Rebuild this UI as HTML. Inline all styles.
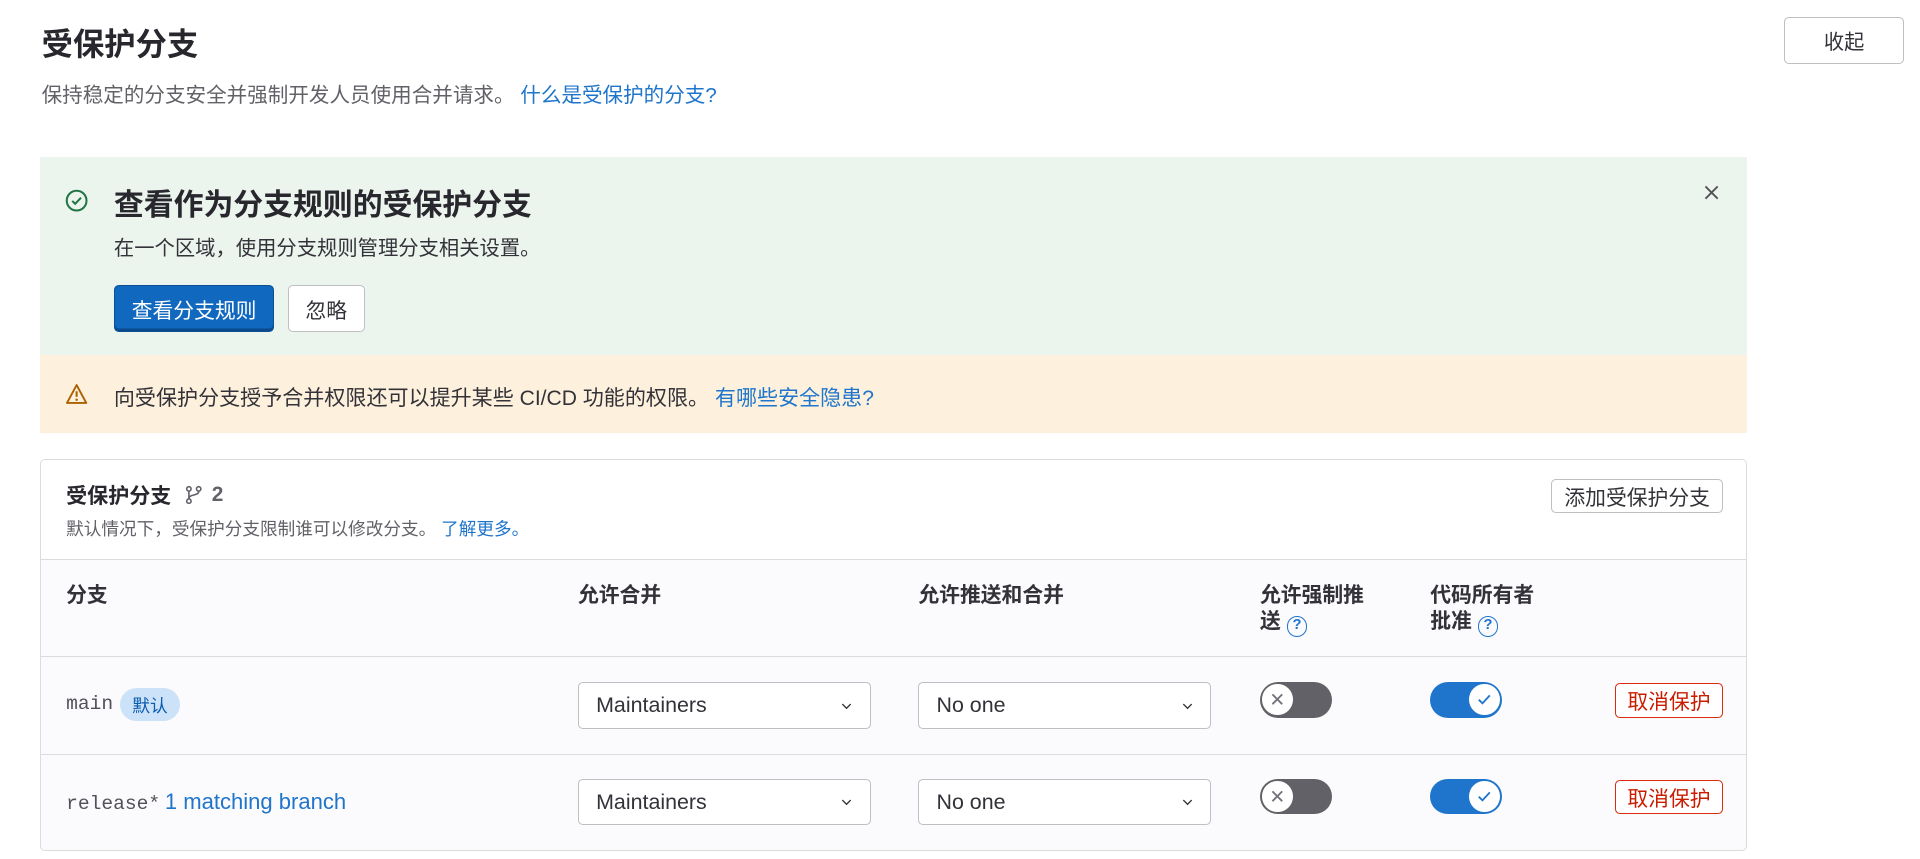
<!DOCTYPE html>
<html><head><meta charset="utf-8">
<style>
html,body{margin:0;padding:0;background:#fff;}
body{width:1568px;height:701.5px;zoom:1.2245;position:relative;overflow:hidden;font-family:"Liberation Sans","Noto Sans CJK SC",sans-serif;color:#333238;font-size:14px;}
.a{position:absolute;}
a{color:#1f75cb;text-decoration:none;}
.btn{position:absolute;box-sizing:border-box;border:1px solid #bfbfc3;border-radius:4px;background:#fff;display:flex;align-items:center;justify-content:center;font-size:17px;color:#333238;}
.sel{position:absolute;box-sizing:border-box;width:239px;height:38px;border:1px solid #bfbfc3;border-radius:4px;background:#fff;font-size:17.5px;padding-left:14px;display:flex;align-items:center;color:#333238;}
.sel svg{position:absolute;right:14px;top:16px;}
.tg{position:absolute;width:59px;height:29px;border-radius:15px;}
.tg .k{position:absolute;top:2px;width:25px;height:25px;border-radius:50%;background:#fff;}
.th{position:absolute;font-weight:bold;font-size:17px;line-height:21px;color:#333238;}
.rm{position:absolute;box-sizing:border-box;width:88px;height:28px;border:1px solid #dd2b0e;border-radius:4px;color:#c91c00;font-size:17px;display:flex;align-items:center;justify-content:center;background:#fff;}
.q{display:inline-block;width:17px;height:17px;border:1.5px solid #1f75cb;border-radius:50%;box-sizing:border-box;color:#1f75cb;font-size:12px;line-height:14px;text-align:center;vertical-align:-1px;font-weight:bold;}
.mono{font-family:"Liberation Mono",monospace;font-size:16px;color:#535158;}
</style></head><body>
<div class="a" style="left:34px;top:16px;font-size:25.6px;font-weight:bold;color:#28272d;">受保护分支</div>
<div class="a" style="left:34px;top:64px;font-size:16.8px;color:#626168;">保持稳定的分支安全并强制开发人员使用合并请求。 <a>什么是受保护的分支?</a></div>
<div class="btn" style="left:1457px;top:14px;width:98px;height:38px;font-size:16.5px;">收起</div>

<div class="a" style="left:33px;top:128px;width:1394px;height:162px;background:#ecf4ee;"></div>
<svg class="a" style="left:53px;top:154px" width="19" height="19" viewBox="0 0 16 16"><circle cx="8" cy="8" r="6.8" fill="none" stroke="#217645" stroke-width="1.4"/><path d="M5 8.2l2 2 4-4.2" fill="none" stroke="#217645" stroke-width="1.4"/></svg>
<div class="a" style="left:93px;top:147px;font-size:24.4px;font-weight:bold;color:#28272d;">查看作为分支规则的受保护分支</div>
<div class="a" style="left:93px;top:189px;font-size:16.6px;color:#333238;">在一个区域，使用分支规则管理分支相关设置。</div>
<div class="btn" style="left:93px;top:233px;width:131px;height:38px;background:#1068bf;border:1px solid #0b4f94;color:#fff;box-shadow:inset 0 -2px 0 #0a4a8c;">查看分支规则</div>
<div class="btn" style="left:235px;top:233px;width:63px;height:38px;">忽略</div>
<svg class="a" style="left:1391px;top:150px" width="14" height="14" viewBox="0 0 14 14"><path d="M2 2l10 10M12 2L2 12" stroke="#535158" stroke-width="1.5"/></svg>

<div class="a" style="left:33px;top:290px;width:1394px;height:64px;background:#fdf1dd;"></div>
<svg class="a" style="left:53px;top:313px" width="19" height="18" viewBox="0 0 16 16"><path d="M8 1.5L15 14.5H1z" fill="none" stroke="#ab6100" stroke-width="1.4" stroke-linejoin="round"/><path d="M8 6v4" stroke="#ab6100" stroke-width="1.5"/><circle cx="8" cy="12.2" r=".9" fill="#ab6100"/></svg>
<div class="a" style="left:93px;top:312px;font-size:17.2px;color:#333238;">向受保护分支授予合并权限还可以提升某些 CI/CD 功能的权限。 <a>有哪些安全隐患?</a></div>

<div class="a" style="left:33px;top:375px;width:1394px;height:320px;box-sizing:border-box;border:1px solid #dcdcde;border-radius:4px;background:#fbfafd;overflow:hidden;">
  <div class="a" style="left:0;top:0;width:1394px;height:81px;background:#fff;border-bottom:1px solid #dcdcde;"></div>
  <div class="a" style="left:0;top:160px;width:1394px;border-top:1px solid #dcdcde;"></div>
  <div class="a" style="left:0;top:240px;width:1394px;border-top:1px solid #dcdcde;"></div>
</div>
<div class="a" style="left:54px;top:392px;height:24px;display:flex;align-items:center;">
<span style="font-size:17.2px;font-weight:bold;color:#28272d;">受保护分支</span>
<svg style="margin-left:10px" width="16" height="18" viewBox="0 0 16 16"><circle cx="4" cy="3" r="1.8" fill="none" stroke="#626168" stroke-width="1.3"/><circle cx="12" cy="3" r="1.8" fill="none" stroke="#626168" stroke-width="1.3"/><circle cx="4" cy="13" r="1.8" fill="none" stroke="#626168" stroke-width="1.3"/><path d="M4 5v6M12 5c0 4-8 2-8 6" fill="none" stroke="#626168" stroke-width="1.3"/></svg>
<span style="margin-left:7px;font-size:17px;font-weight:bold;color:#626168;">2</span></div>
<div class="a" style="left:54px;top:421px;font-size:14.4px;color:#626168;">默认情况下，受保护分支限制谁可以修改分支。 <a>了解更多。</a></div>
<div class="btn" style="left:1267px;top:391px;width:140px;height:28px;">添加受保护分支</div>

<div class="th" style="left:54px;top:476px;">分支</div>
<div class="th" style="left:472px;top:476px;">允许合并</div>
<div class="th" style="left:750px;top:476px;">允许推送和合并</div>
<div class="th" style="left:1029px;top:476px;width:95px;">允许强制推<br>送 <span class="q">?</span></div>
<div class="th" style="left:1168px;top:476px;">代码所有者<br>批准 <span class="q">?</span></div>

<div class="a mono" style="left:54px;top:566px;">main</div>
<div class="a" style="left:98px;top:562px;width:49px;height:27px;border-radius:14px;background:#cbe2f9;color:#0b5cad;font-size:14.5px;display:flex;align-items:center;justify-content:center;">默认</div>
<div class="a" style="left:54px;top:644px;"><span class="mono">release*</span> <a style="font-size:18px;">1 matching branch</a></div>

<div class="sel" style="left:472px;top:557px;">Maintainers<svg width="9" height="6" viewBox="0 0 10 7"><path d="M1 1l4 4 4-4" fill="none" stroke="#333" stroke-width="1.3"/></svg></div>
<div class="sel" style="left:750px;top:557px;">No one<svg width="9" height="6" viewBox="0 0 10 7"><path d="M1 1l4 4 4-4" fill="none" stroke="#333" stroke-width="1.3"/></svg></div>
<div class="sel" style="left:472px;top:636px;">Maintainers<svg width="9" height="6" viewBox="0 0 10 7"><path d="M1 1l4 4 4-4" fill="none" stroke="#333" stroke-width="1.3"/></svg></div>
<div class="sel" style="left:750px;top:636px;">No one<svg width="9" height="6" viewBox="0 0 10 7"><path d="M1 1l4 4 4-4" fill="none" stroke="#333" stroke-width="1.3"/></svg></div>

<div class="tg" style="left:1029px;top:557px;background:#626168;"><div class="k" style="left:2px;"><svg width="25" height="25" viewBox="0 0 25 25"><path d="M8.5 8.5l8 8M16.5 8.5l-8 8" stroke="#737278" stroke-width="1.5"/></svg></div></div>
<div class="tg" style="left:1029px;top:636px;background:#626168;"><div class="k" style="left:2px;"><svg width="25" height="25" viewBox="0 0 25 25"><path d="M8.5 8.5l8 8M16.5 8.5l-8 8" stroke="#737278" stroke-width="1.5"/></svg></div></div>
<div class="tg" style="left:1168px;top:557px;background:#1f75cb;"><div class="k" style="right:2px;"><svg width="25" height="25" viewBox="0 0 25 25"><path d="M8 12.8l3 3 6-6.5" fill="none" stroke="#1f75cb" stroke-width="1.5"/></svg></div></div>
<div class="tg" style="left:1168px;top:636px;background:#1f75cb;"><div class="k" style="right:2px;"><svg width="25" height="25" viewBox="0 0 25 25"><path d="M8 12.8l3 3 6-6.5" fill="none" stroke="#1f75cb" stroke-width="1.5"/></svg></div></div>

<div class="rm" style="left:1319px;top:558px;">取消保护</div>
<div class="rm" style="left:1319px;top:637px;">取消保护</div>
</body></html>
